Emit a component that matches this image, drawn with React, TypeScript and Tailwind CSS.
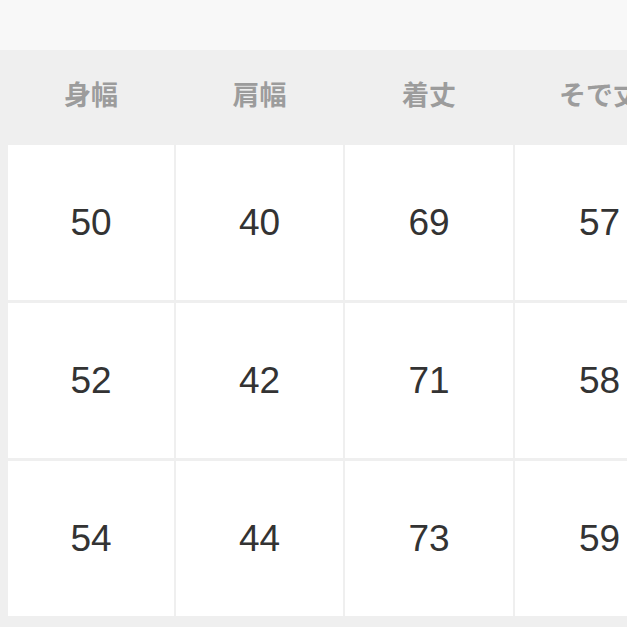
import React from "react";

const headers = ["身幅", "肩幅", "着丈", "そで丈"];
const rows = [
  ["50", "40", "69", "57"],
  ["52", "42", "71", "58"],
  ["54", "44", "73", "59"],
];

export default function App() {
  return (
    <div className="w-[627px] h-[627px] overflow-hidden bg-[#efefef] flex flex-col">
      <div className="h-[50px] shrink-0 bg-[#f8f8f8]" />
      <div className="pl-[8px]">
        <div className="grid grid-cols-[166px_167px_168px_169px] gap-x-[2px] gap-y-[3px] w-max">
          {headers.map((h) => (
            <div
              key={h}
              className="h-[95px] -mb-[3px] pb-[6px] flex items-center justify-center whitespace-nowrap text-[27px] font-bold text-[#9c9c9c] bg-[#efefef]"
              style={{ fontFamily: '"Noto Sans CJK JP", "Noto Sans", sans-serif' }}
            >
              {h}
            </div>
          ))}
          {rows.flat().map((v, i) => (
            <div
              key={i}
              className="h-[155px] bg-white flex items-center justify-center text-[37px] text-[#333333]"
              style={{ fontFamily: '"Liberation Sans", Arial, sans-serif' }}
            >
              {v}
            </div>
          ))}
        </div>
      </div>
    </div>
  );
}
